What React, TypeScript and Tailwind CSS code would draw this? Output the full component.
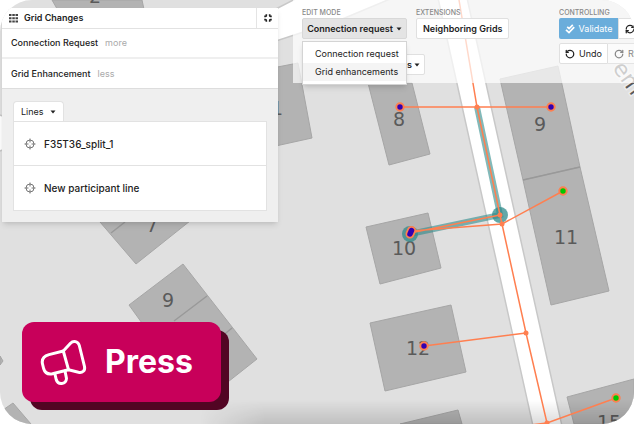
import { Minimize, RefreshCw, RotateCcw, RotateCw } from "lucide-react";

const LINES = ["F35T36_split_1", "New participant line"];
const EDIT_MODES = ["Connection request", "Grid enhancements"];

const BUILDINGS = [
  "52,0 142,0 145,14 60,14",
  "262,70 298,63 312,138 262,149",
  "368,83 412,83 430,154 389,165",
  "500,79 558,66 580,167 523,180",
  "523,180 580,167 609,291 551,305",
  "366,227 428,213 441,268 380,284",
  "370,323 451,305 466,372 385,391",
  "400,424 458,410 462,424",
  "567,397 634,379 634,424 574,424",
  "90,210 100,222 136,264 195,217",
  "129,305 183,264 257,359 200,404",
  "0,412 13,403 31,424 0,424",
  "0,356 3,361 0,365",
];

const LABELS = [
  { x: 95, y: 3, text: "2" },
  { x: 277, y: 115, text: "1" },
  { x: 399, y: 126, text: "8" },
  { x: 540, y: 131, text: "9" },
  { x: 566, y: 244, text: "11" },
  { x: 404, y: 255, text: "10" },
  { x: 418, y: 355, text: "12" },
  { x: 609, y: 429, text: "15" },
  { x: 152, y: 232, text: "7" },
  { x: 168, y: 307, text: "9" },
];

const POINTS = [
  { x: 400, y: 107, color: "#3300b0" },
  { x: 551, y: 107, color: "#3300b0" },
  { x: 424, y: 346, color: "#3300b0" },
  { x: 563, y: 191, color: "#00c800" },
  { x: 616, y: 398, color: "#00c800" },
];

const JUNCTIONS = [
  [477, 107],
  [500, 215],
  [502, 224],
  [526, 333],
  [547, 423],
];

function Caret() {
  return (
    <svg viewBox="0 0 6 4" className="w-1.5 h-1 shrink-0" fill="currentColor" aria-hidden="true">
      <path d="M0.5 0.5h5L3 3.5z" />
    </svg>
  );
}

function TargetIcon() {
  return (
    <svg viewBox="0 0 12 12" className="w-3 h-3 shrink-0 text-[#777]" fill="none" stroke="currentColor" aria-hidden="true">
      <circle cx="6" cy="6" r="4" />
      <path d="M6 0.5v4M6 7.5v4M0.5 6h4M7.5 6h4" />
    </svg>
  );
}

function DoubleCheckIcon() {
  return (
    <svg viewBox="0 0 10 10" className="w-2.5 h-2.5 shrink-0" fill="none" stroke="currentColor" strokeWidth="1.7" aria-hidden="true">
      <path d="M2.2 2.8l1.9 1.7L7.8 0.8M1 5.8l3 2.8 5.2-5.4" />
    </svg>
  );
}

function MegaphoneIcon() {
  return (
    <svg
      viewBox="0 0 47 47"
      className="w-[47px] h-[47px] shrink-0"
      fill="none"
      stroke="currentColor"
      strokeWidth="3"
      strokeLinecap="round"
      strokeLinejoin="round"
      aria-hidden="true"
    >
      <path d="M23.3 12L9 15.6C4 17 1.5 20.5 2.5 25L3.6 29.5C4.8 33.6 8 35.6 12.5 34.7L28.5 30.7" />
      <path d="M23.3 12L28.5 30.7L38.5 33.3C42.5 34.2 45.4 31.5 44.5 27.5L39.3 6.5C38.2 2.3 33.5 1 30.5 4.3Z" />
      <path d="M14.8 34.5L16.2 40.5C18 46.5 26 45.5 26.5 39.5L25 32" />
    </svg>
  );
}

function GridMap() {
  return (
    <svg viewBox="0 0 634 424" preserveAspectRatio="xMidYMid slice" className="absolute inset-0 w-full h-full" aria-hidden="true">
      <defs>
        <linearGradient id="fade" x1="0" y1="0" x2="0" y2="1">
          <stop offset="0" stopColor="#000" stopOpacity="0" />
          <stop offset="1" stopColor="#000" stopOpacity="0.14" />
        </linearGradient>
        <linearGradient id="side" x1="0" y1="0" x2="1" y2="0">
          <stop offset="0" stopColor="#000" />
          <stop offset="0.15" stopColor="#fff" />
        </linearGradient>
        <mask id="fadeMask">
          <rect x="200" y="400" width="434" height="24" fill="url(#side)" />
        </mask>
      </defs>
      <rect width="634" height="424" fill="#e0e0e0" />
      <g fill="#fff" stroke="#c8c8c8" strokeWidth="1.5">
        <path d="M438 -2L533 426H562L467 -2Z" />
        <path d="M270 12L305 -6H402L340 20L270 43Z" />
        <path d="M-4 114L3 116V150L-4 152Z" />
      </g>
      <g fill="#b3b3b3" stroke="#a6a6a6">
        {BUILDINGS.map((points) => (
          <polygon key={points} points={points} />
        ))}
        <path d="M111 233L125 222M207 296L174 321M232 328L215 342M523 180L580 167" stroke="#999" strokeWidth="1.5" fill="none" />
      </g>
      <g fill="#5a5a5a" fontSize="19" textAnchor="middle" fontFamily="'DejaVu Sans', sans-serif">
        {LABELS.map(({ x, y, text }) => (
          <text key={`${text}-${x}`} x={x} y={y}>{text}</text>
        ))}
        <text x="612" y="68" fontSize="22" textAnchor="start" transform="rotate(55 612 68)" stroke="#ececec" strokeWidth="3" paintOrder="stroke">em</text>
      </g>
      <rect x="200" y="400" width="434" height="24" fill="url(#fade)" mask="url(#fadeMask)" />
      <g stroke="#2f8b8b" fill="none" strokeOpacity="0.6" strokeWidth="6">
        <path d="M477 107L500 215L410 234" />
      </g>
      <circle cx="500" cy="215" r="8" fill="#2f8b8b" fillOpacity="0.75" />
      <circle cx="410" cy="234" r="8" fill="#2f8b8b" fillOpacity="0.75" />
      <g stroke="#ff7f50" strokeWidth="1.5" fill="none">
        <path d="M459 0L477 107L500 215L502 224L526 333L547 423" />
        <path d="M400 107H551M410 233L500 215M411 231L502 224L563 191M424 346L526 333M530 425L547 423L616 398" />
      </g>
      {JUNCTIONS.map(([x, y]) => (
        <circle key={y} cx={x} cy={y} r="2.5" fill="#ff7f50" />
      ))}
      {POINTS.map(({ x, y, color }) => (
        <circle key={`${x}-${y}`} cx={x} cy={y} r="3.7" fill={color} stroke="#ff7f50" strokeWidth="2" />
      ))}
      <g strokeLinecap="round">
        <path d="M410 234L411.5 230.5" stroke="#ff7f50" strokeWidth="9" />
        <path d="M410 234L411.5 230.5" stroke="#3300b0" strokeWidth="5.5" />
      </g>
    </svg>
  );
}

function ChangesPanel() {
  return (
    <section className="w-[276px] shrink-0 mt-2 ml-0.5 bg-[#efefef] shadow-md text-[#222]">
      <header className="flex items-center h-5 bg-white">
        <svg viewBox="0 0 9 9" className="w-[9px] h-[9px] ml-[7px] mr-1.5" fill="#444" aria-hidden="true">
          <path d="M0 0h2.5v2H0zM3.3 0h2.5v2H3.3zM6.5 0H9v2H6.5zM0 3.2h2.5v2H0zM3.3 3.2h2.5v2H3.3zM6.5 3.2H9v2H6.5zM0 6.4h2.5v2H0zM3.3 6.4h2.5v2H3.3zM6.5 6.4H9v2H6.5z" />
        </svg>
        <h2 className="font-semibold">Grid Changes</h2>
        <button type="button" aria-label="Collapse" className="ml-auto w-[22px] h-5 flex items-center justify-center border-l border-[#e4e4e4]">
          <Minimize className="w-2.5 h-2.5" strokeWidth={4} strokeLinecap="butt" />
        </button>
      </header>
      <div className="flex items-center gap-[7px] h-[31px] px-[9px] bg-white border-t border-b-2 border-t-[#e2e2e2] border-b-[#efefef]">
        <span className="font-medium">Connection Request</span>
        <button type="button" className="text-[#aaa]">more</button>
      </div>
      <div className="flex items-center gap-[7px] h-[30px] px-[9px] bg-white border-b border-[#ddd]">
        <span className="font-medium">Grid Enhancement</span>
        <button type="button" className="text-[#aaa]">less</button>
      </div>
      <div className="px-[11px] pt-3 pb-[11px]">
        <button type="button" className="flex items-center gap-1.5 h-5 px-[7px] bg-white border border-b-0 border-[#e2e2e2] rounded-t-sm">
          Lines <Caret />
        </button>
        <ul className="bg-white border border-[#e2e2e2] divide-y divide-[#e2e2e2] text-[10px] font-medium">
          {LINES.map((line) => (
            <li key={line} className="flex items-center gap-2 h-11 px-[10px]">
              <TargetIcon />
              {line}
            </li>
          ))}
        </ul>
      </div>
    </section>
  );
}

function Toolbar() {
  return (
    <div className="flex flex-1 min-w-0 items-start ml-[15px] h-[83px] pt-2 pl-[9px] bg-white/70 text-[#222]">
      <div className="relative shrink-0 w-[105px]">
        <h3 className="text-[7px] leading-[10px] font-medium text-[#888]">EDIT MODE</h3>
        <button type="button" aria-expanded="true" className="flex items-center justify-center gap-[3px] w-full h-[21px] bg-[#e4e4e4] border border-[#d8d8d8] rounded-xs font-semibold whitespace-nowrap">
          Connection request <Caret />
        </button>
        <ul className="absolute z-10 top-[33px] left-0 w-full py-[3px] bg-white border border-[#d4d4d4] shadow-md">
          {EDIT_MODES.map((mode, i) => (
            <li key={mode} className={i === 1 ? "bg-[#f4f4f4]" : ""}>
              <button type="button" className="block w-full h-[18px] pl-3 text-left whitespace-nowrap">{mode}</button>
            </li>
          ))}
        </ul>
        <button type="button" className="flex items-center justify-end gap-0.5 w-[123px] h-[21px] mt-[15px] pr-1 bg-white border border-[#e0e0e0] rounded-xs font-semibold">
          s <Caret />
        </button>
      </div>
      <div className="shrink-0 ml-[9px]">
        <h3 className="text-[7px] leading-[10px] font-medium text-[#888]">EXTENSIONS</h3>
        <button type="button" className="h-[21px] px-1.5 bg-white border border-[#e0e0e0] rounded-xs font-semibold whitespace-nowrap">
          Neighboring Grids
        </button>
      </div>
      <div className="ml-auto w-[75px] shrink-0 overflow-hidden">
        <h3 className="text-[7px] leading-[10px] font-medium text-[#888]">CONTROLLING</h3>
        <div className="flex w-24 h-[21px]">
          <button type="button" className="flex items-center justify-center gap-1 w-[59px] shrink-0 bg-[#6aaddb] text-white rounded-l-xs">
            <DoubleCheckIcon /> Validate
          </button>
          <button type="button" aria-label="Refresh" className="w-8 pl-1.5 bg-white border border-[#e0e0e0]">
            <RefreshCw className="w-2.5 h-2.5" strokeWidth={3} />
          </button>
        </div>
        <div className="flex w-24 h-[21px] mt-1">
          <button type="button" className="flex items-center justify-center gap-1 w-[49px] shrink-0 bg-white border border-[#e0e0e0] rounded-l-xs">
            <RotateCcw className="w-2.5 h-2.5" strokeWidth={3} /> Undo
          </button>
          <button type="button" className="flex items-center gap-1 pl-1.5 w-[47px] border-y border-[#e4e4e4] bg-white/50 text-[#888]">
            <RotateCw className="w-2.5 h-2.5 shrink-0" strokeWidth={3} /> Redo
          </button>
        </div>
      </div>
    </div>
  );
}

export default function App() {
  return (
    <main className="relative flex flex-col min-h-screen overflow-hidden rounded-[32px] [font-family:Inter,'Liberation_Sans',sans-serif] text-[9px] leading-4">
      <GridMap />
      <div className="relative flex items-start">
        <ChangesPanel />
        <Toolbar />
      </div>
      <a
        href="#press"
        className="relative flex items-center gap-[18px] self-start mt-auto ml-[22px] mb-[22px] h-20 pl-[18px] pr-7 rounded-xl bg-[#c8005a] text-white text-[32px] leading-10 font-bold shadow-[8px_8px_0_#520523]"
      >
        <MegaphoneIcon />
        Press
      </a>
    </main>
  );
}
